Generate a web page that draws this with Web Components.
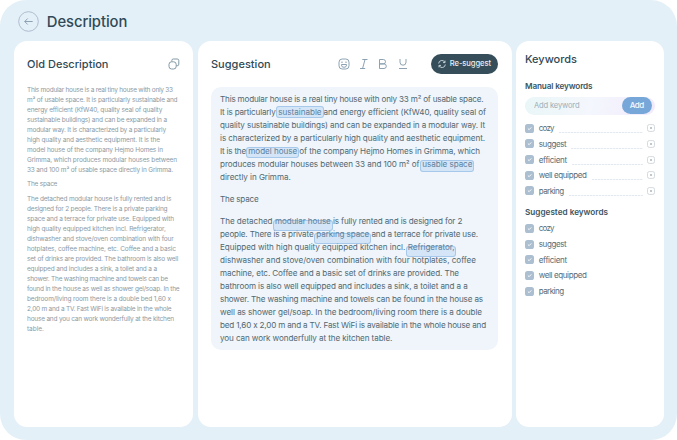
<!DOCTYPE html>
<html lang="en"><head><meta charset="utf-8"><title>Description</title>
<style>
html,body{margin:0;height:100%;background:#fff;overflow:hidden}
body{font-family:Inter,"Open Sans",sans-serif;color:#33505c}
</style></head><body>
<description-app></description-app>
<script>
const define=(name,html,setup)=>customElements.define(name,class extends HTMLElement{
  connectedCallback(){
    if(this.shadowRoot)return;
    this.attachShadow({mode:'open'}).innerHTML=html;
    if(setup)setup.call(this,this.shadowRoot);
  }
});
// A run of text tracked to an exact width.
define('fit-text',`<style>:host{display:block;white-space:pre;flex:none}</style><span><slot></slot></span>`,function(r){
  const s=r.querySelector('span'),w=+this.getAttribute('w');
  this.style.width=w+'px';
  const natural=s.getBoundingClientRect().width;
  s.style.letterSpacing=(w-natural)/(this.textContent.length-.5)+'px';
});
// A word with a tinted box that may sit slightly below it.
define('mark-text',`<style>:host{display:block;position:relative;flex:none;color:#5d7f9b}
i{position:absolute;box-sizing:border-box;left:-2px;right:-2px;height:11.5px;border:1px solid rgba(120,170,220,.5);border-radius:3px;background:rgba(160,200,240,.34)}
fit-text{position:relative}</style><i></i>`,function(r){
  r.querySelector('i').style.top=this.getAttribute('drop')+'px';
  const n=document.createElement('fit-text');
  n.setAttribute('w',this.getAttribute('w'));n.textContent=this.textContent;r.append(n);
});
define('text-block',`<style>:host{display:block}.l{display:flex;height:var(--pitch);line-height:var(--pitch)}.gap{height:var(--gap)}</style>`,function(r){
  for(const line of this.lines||[]){
    const d=document.createElement('div');
    if(!line){d.className='gap';r.append(d);continue}
    d.className='l';r.append(d);
    let x=0;
    for(const [t,from,to,drop] of line){
      const e=document.createElement(drop===undefined?'fit-text':'mark-text');
      e.setAttribute('w',(to-from).toFixed(2));
      if(drop!==undefined)e.setAttribute('drop',drop);
      e.style.marginLeft=(from-x)+'px';x=to;
      e.textContent=t;d.append(e);
    }
  }
});
define('panel-card',`<style>:host{display:block;background:#fff;border-radius:13px;box-sizing:border-box}</style><slot></slot>`);
define('back-button',`<style>:host{display:block;width:21px;height:21px}svg{display:block}</style>
<svg width="21" height="21" fill="none" stroke="#a9b7cd"><circle cx="10.5" cy="10.5" r="9.8" stroke-width=".9"/><path d="M14.7 10.5H6.8M9.7 7.5l-3 3 3 3" stroke="#8499aa" stroke-width=".9"/></svg>`);
define('copy-icon',`<style>:host,svg{display:block}</style><svg width="12" height="12" fill="none" stroke="#758d9c" stroke-width=".9"><path d="M3.8 3.4V2.6Q3.8 1 5.4 1H9.2Q10.8 1 10.8 2.6V6.2Q10.8 7.8 9.2 7.8H8.4"/><rect x="1" y="3.8" width="7.2" height="7.2" rx="2.6"/></svg>`);
define('format-tools',`<style>:host{display:flex;gap:7.8px}svg{display:block}</style>
<svg width="12" height="12" fill="none" stroke="#8098aa" stroke-width=".9"><rect x="1" y="1" width="10" height="10" rx="3.2"/><path d="M3.2 4.2h1.6M7.2 4.2h1.6M3.5 6.5h5v.6a2.5 2.2 0 0 1-5 0z"/></svg>
<svg width="12" height="12" fill="none" stroke="#8098aa" stroke-width=".9"><path d="M4.3 1.5H9.5M2 10.5H7.2M7 1.5 4.6 10.5"/></svg>
<svg width="12" height="12" fill="none" stroke="#8098aa" stroke-width=".9"><path d="M2.5 1.5H6.3a2.2 2.2 0 0 1 0 4.4H2.5zM2.5 5.9H7a2.3 2.3 0 0 1 0 4.6H2.5z"/></svg>
<svg width="12" height="12" fill="none" stroke="#8098aa" stroke-width=".9"><path d="M3 1V4.2a3 3 0 0 0 6 0V1M2 10.5h8"/></svg>`);
define('suggest-button',`<style>:host{display:flex;align-items:center;box-sizing:border-box;width:67px;height:20px;border-radius:10px;background:#354e5a;color:#e8eef1;padding-left:7.5px;gap:3.8px;font-size:7.6px;font-weight:500}svg{display:block}</style>
<svg width="8" height="8" fill="none" stroke="#d8e3e8" stroke-width=".85"><path d="M.7 3.5A3.2 3.2 0 0 1 6.8 2.3M7 .6V2.6H5M7.3 4.5A3.2 3.2 0 0 1 1.2 5.7M1 7.4V5.4H3"/></svg><fit-text w="41.2">Re-suggest</fit-text>`);
define('keyword-input',`<style>:host{display:flex;box-sizing:border-box;width:130px;height:18px;border-radius:9px;background:linear-gradient(100deg,#e9f6f7,#f4f7fd 50%,#f2eafc);align-items:center;justify-content:space-between;padding:0 3.5px 0 9px;font-size:7.6px;color:#9caeb9}
b{display:flex;align-items:center;justify-content:center;width:29.5px;height:17px;border-radius:8.5px;background:#77a7d8;color:#f5faff;font-weight:500;font-size:8px;margin-top:-1px}</style>
<fit-text w="45.5">Add keyword</fit-text><b><fit-text w="14.2">Add</fit-text></b>`);
define('keyword-row',`<style>:host{display:flex;height:15.67px;align-items:center;font-size:8px;color:#566c77}svg{display:block;flex:none}.c{margin-right:4.7px}
i{flex:1;align-self:flex-end;margin:0 4px 2.8px 5px;height:1px;background:repeating-linear-gradient(90deg,#e3e9ee 0 2px,#f4f7f9 2px 3px)}</style>
<svg class="c" width="9" height="9"><rect width="9" height="9" rx="2.6" fill="#abbfd1"/><path d="M2.9 4.5l1.2 1.2 2.2-2.3" fill="none" stroke="#fff" stroke-width=".9"/></svg><slot></slot>`,function(r){
  if(this.hasAttribute('removable'))r.innerHTML+=`<i></i><svg width="8" height="8" fill="none" stroke="#c9d0d7" stroke-width=".8"><rect x=".5" y=".6" width="7" height="6.8" rx="1.8"/><path d="M3 3l2 2M5 3 3 5" stroke="#b0bac2"/></svg>`;
});
const L=(t,to)=>[[t,0,to]];
const oldLines=[
L('This modular house is a real tiny house with only 33',146),
L('m² of usable space. It is particularly sustainable and',150.5),
L('energy efficient (KfW40, quality seal of quality',135.3),
L('sustainable buildings) and can be expanded in a',140),
L('modular way. It is characterized by a particularly',139),
L('high quality and aesthetic equipment. It is the',133),
L('model house of the company Hejmo Homes in',136),
L('Grimma, which produces modular houses between',150),
L('33 and 100 m² of usable space directly in Grimma.',146),null,
L('The space',30.3),null,
L('The detached modular house is fully rented and is',144.3),
L('designed for 2 people. There is a private parking',140.5),
L('space and a terrace for private use. Equipped with',147),
L('high quality equipped kitchen incl. Refrigerator,',138.7),
L('dishwasher and stove/oven combination with four',146.7),
L('hotplates, coffee machine, etc. Coffee and a basic',149),
L('set of drinks are provided. The bathroom is also well',151.2),
L('equipped and includes a sink, a toilet and a a',130),
L('shower. The washing machine and towels can be',141),
L('found in the house as well as shower gel/soap. In the',152.5),
L('bedroom/living room there is a double bed 1,60 x',144),
L('2,00 m and a TV. Fast WiFi is available in the whole',144.5),
L('house and you can work wonderfully at the kitchen',147),
L('table.',16.8)];
const newLines=[
L('This modular house is a real tiny house with only 33 m² of usable space.',263.5),
[['It is particularly',0,55.6],['sustainable',58.3,101.6,.5],['and energy efficient (KfW40, quality seal of',103.5,266]],
L('quality sustainable buildings) and can be expanded in a modular way. It',265),
L('is characterized by a particularly high quality and aesthetic equipment.',265),
[['It is the',0,26],['model house',28.3,77.2,2],['of the company Hejmo Homes in Grimma, which',79.3,260]],
[['produces modular houses between 33 and 100 m² of',0,199.5],['usable space',202.3,252.4,2.8]],
L('directly in Grimma.',70.7),null,
L('The space',38.6),null,
[['The detached',0,52.5],['modular house',55,110.8,5],['is fully rented and is designed for 2',113,242.3]],
[['people. There is a private',0,93.6],['parking space',96.3,149.3,5],['and a terrace for private use.',151.5,258]],
[['Equipped with high quality equipped kitchen incl.',0,185.2],['Refrigerator,',187.8,234.5,5]],
L('dishwasher and stove/oven combination with four hotplates, coffee',256),
L('machine, etc. Coffee and a basic set of drinks are provided. The',239),
L('bathroom is also well equipped and includes a sink, a toilet and a a',247.7),
L('shower. The washing machine and towels can be found in the house as',263),
L('well as shower gel/soap. In the bedroom/living room there is a double',262),
L('bed 1,60 x 2,00 m and a TV. Fast WiFi is available in the whole house and',267),
L('you can work wonderfully at the kitchen table.',172.3)];
const words=[['cozy',15.5],['suggest',27.8],['efficient',28.3],['well equipped',48],['parking',25.2]];
const rows=a=>words.map(([t,w])=>`<keyword-row ${a}><fit-text w="${w}">${t}</fit-text></keyword-row>`).join('');
define('description-app',`<style>
:host{display:flex;flex-direction:column;box-sizing:border-box;width:677px;height:440px;padding:11px 13px 13.5px 13.5px;border-radius:26px;background:#e4f0f7}
header{display:flex;height:21px;align-items:center;padding-left:4px;gap:8.3px;font-size:14.8px;font-weight:500;color:#2f4a57}
main{flex:1;display:grid;grid-template-columns:179.5px 314px 148px;gap:4.5px;margin-top:8.5px}
.h{display:flex;align-items:center;height:20px;font-size:11px;font-weight:500;color:#2f4a57}
.h>:nth-child(2){margin-left:auto}
.old{padding:13px 13px 0 13.5px}.mid{padding:13px 14px 0 13.5px}.key{padding:8.5px 9px 0 9px}
.old text-block{--pitch:10px;--gap:4.5px;font-size:6.5px;color:#8c9aa3;margin-top:11.2px}
.box{background:#eff5fa;border-radius:10px;margin-top:13.5px;height:262.5px;width:287px;box-sizing:border-box;padding:5.5px 0 0 9px}
.box text-block{--pitch:13px;--gap:9px;font-size:8.1px;color:#506873}
format-tools{margin-right:21.3px}
h3{margin:0;font-size:8.2px;font-weight:600;line-height:12px;color:#3b5562}
</style>
<header><back-button></back-button><fit-text w="80.5">Description</fit-text></header>
<main>
<panel-card class="old"><div class="h"><fit-text w="81.5">Old Description</fit-text><copy-icon></copy-icon></div></panel-card>
<panel-card class="mid"><div class="h"><fit-text w="59.7">Suggestion</fit-text><format-tools></format-tools><suggest-button></suggest-button></div><div class="box"></div></panel-card>
<panel-card class="key"><div class="h"><fit-text w="52">Keywords</fit-text></div>
<h3 style="margin-top:10.5px"><fit-text w="67.5">Manual keywords</fit-text></h3>
<keyword-input style="margin-top:5.3px"></keyword-input>
<div style="margin:5.7px 0 7px">${rows('removable')}</div>
<h3><fit-text w="83">Suggested keywords</fit-text></h3>
<div style="margin-top:2.8px">${rows('')}</div></panel-card>
</main>`,function(r){
  for(const [where,lines] of [['.old',oldLines],['.box',newLines]]){
    const b=document.createElement('text-block');b.lines=lines;r.querySelector(where).append(b);
  }
});
</script></body></html>
